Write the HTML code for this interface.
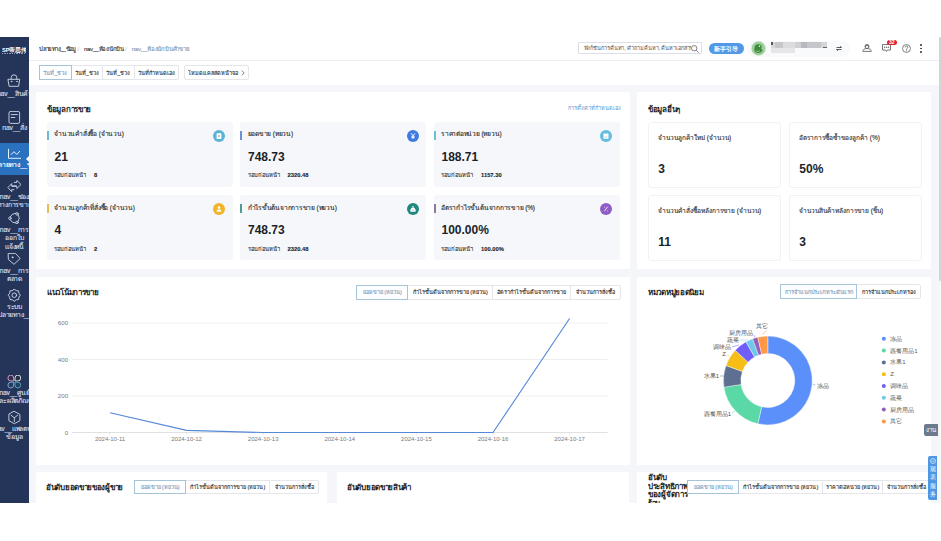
<!DOCTYPE html>
<html><head><meta charset="utf-8">
<style>
*{box-sizing:border-box;margin:0;padding:0}
html,body{width:941px;height:541px;overflow:hidden;background:#fff;font-family:"Liberation Sans",sans-serif;color:#222}
.abs{position:absolute}
#app{position:absolute;left:0;top:37px;width:941px;height:466px;background:#f5f6f9;overflow:hidden}
#side{position:absolute;left:0;top:0;width:29px;height:466px;background:#243559;overflow:hidden}
.sl{position:absolute;left:-6px;width:41px;text-align:center;color:#d3dae8;font-size:6.8px;line-height:8.5px;white-space:nowrap;letter-spacing:-0.15px}
.si{position:absolute;left:7px;width:14px;height:14px}
#hdr{position:absolute;left:29px;top:0;width:910px;height:24px;background:#fff;border-bottom:1px solid #eceef2}
#tabs{position:absolute;left:29px;top:24px;width:910px;height:24px;background:#fff}
#scroll{position:absolute;left:939px;top:0;width:2px;height:466px;background:#f7f8fa;border-left:0}
#thumb{position:absolute;left:939.3px;top:0;width:1.7px;height:244px;background:#d2d4d8;border-radius:1px}
.card{position:absolute;background:#fff;border-radius:1px}
.ttl{position:absolute;font-size:8px;font-weight:bold;color:#1d1d1f;white-space:nowrap;letter-spacing:-0.3px}
.stat{position:absolute;background:#f5f7fa;border-radius:3px;width:186px;height:65px}
.stat .bar{position:absolute;left:0;top:9px;width:2px;height:9px}
.stat .t{position:absolute;left:7.5px;top:7.5px;font-size:6.6px;color:#2b2b2b;white-space:nowrap;line-height:10px;letter-spacing:-0.22px}
.stat .v{position:absolute;left:8px;top:28px;font-size:12px;font-weight:bold;color:#1b1f2a;line-height:14px}
.stat .p{position:absolute;left:7.5px;top:49.5px;font-size:5.8px;color:#333;line-height:8px;white-space:nowrap;-webkit-text-stroke:0.1px currentColor}
.stat .p b{margin-left:8px;font-weight:bold;color:#222;font-size:5.8px}
.stat .ic{position:absolute;right:7.5px;top:8px;width:12px;height:12px}
.box{position:absolute;background:#fff;border:1px solid #f1f2f5;border-radius:3px;width:133px;height:66px}
.box .t{position:absolute;left:9.5px;top:9.8px;font-size:6.5px;color:#333;white-space:nowrap;line-height:9px}
.box .v{position:absolute;left:9.8px;top:39.2px;font-size:12px;font-weight:bold;color:#1b1f2a;line-height:14px}
.tg{position:absolute;display:flex;height:15px;border:1px solid #e4e6ea;border-radius:2px;background:#fff}
.tg div{height:100%;border-left:1px solid #e4e6ea;font-size:5.5px;color:#333;display:flex;align-items:center;justify-content:center;white-space:nowrap}
.tg div:first-child{border-left:none}
.tg div.on{outline:1px solid #a6c4d6;color:#7a9fc0;background:#fcfeff;z-index:1}
.bc{top:6.5px;font-size:6px;line-height:10px;white-space:nowrap;color:#333}
.stat .t,.box .t,.tg div,.bc,#tabs .tg div{-webkit-text-stroke:0.12px currentColor}
.sl{-webkit-text-stroke:0.15px currentColor}
</style></head><body>
<div id="app">
  <div id="side">
    <div class="abs" style="left:2px;top:9.5px;width:24px;height:6px;color:#fff;font-size:5.8px;font-weight:bold;line-height:6px;letter-spacing:-0.2px;white-space:nowrap;overflow:hidden">SP帝思传</div>
    <div class="abs" style="left:1.5px;top:16.3px;width:24px;height:0.8px;background:repeating-linear-gradient(90deg,#8f9bb8 0 1.5px,transparent 1.5px 2.4px)"></div>
    <!-- bag -->
    <svg class="si" style="top:37px" viewBox="0 0 14 14" fill="none" stroke="#c9d1e2" stroke-width="0.95" stroke-linejoin="round" stroke-linecap="round"><path d="M4.2 5.2V3.6a2.8 2.8 0 0 1 5.6 0V5.2"/><path d="M1.3 5.3h11.4l-1.1 7H2.5z"/><circle cx="4.5" cy="7.5" r="0.35"/><circle cx="10" cy="7.5" r="0.35"/></svg>
    <div class="sl" style="top:52.7px">nav__สินค้า</div>
    <!-- doc -->
    <svg class="si" style="top:74px" viewBox="0 0 14 14" fill="none" stroke="#c9d1e2" stroke-width="0.95" stroke-linejoin="round" stroke-linecap="round"><rect x="2" y="0.4" width="10.6" height="12" rx="1.6"/><path d="M4.2 3.6h6.2M4.2 6.5h3.6"/></svg>
    <div class="sl" style="top:86.7px">nav__สั่ง</div>
    <!-- active -->
    <div class="abs" style="left:0;top:106px;width:29px;height:32px;background:#2a72c0"></div>
    <svg class="si" style="top:111px" viewBox="0 0 14 14" fill="none" stroke="#e6f0fd" stroke-width="1" stroke-linejoin="round" stroke-linecap="round"><path d="M1.5 1.2V10.3H13.8"/><path d="M4.2 6.5L7 3.7 9.8 6.5 12.7 3.3"/></svg>
    <div class="sl" style="top:123.7px;color:#fff">ปลายทาง__ข้อมูล</div>
    <div class="abs" style="left:26px;top:119px;width:0;height:0;border-top:3px solid transparent;border-bottom:3px solid transparent;border-right:3px solid #fff"></div>
    <!-- swap -->
    <svg class="si" style="top:143px" viewBox="0 0 14 14" fill="none" stroke="#c9d1e2" stroke-width="0.95" stroke-linejoin="round" stroke-linecap="round"><path d="M7.2 2.4H9.8V0.4L14 4.5 9.8 8.5V6.4H5"/><path d="M6.8 9.7H4.7v2L0.9 7.6l3.8-4v2.2H9.3"/></svg>
    <div class="sl" style="top:155.7px">nav__ช่อง<br>ทางการขาย</div>
    <!-- share -->
    <svg class="si" style="top:175px" viewBox="0 0 14 14" fill="none" stroke="#c9d1e2" stroke-width="0.95" stroke-linejoin="round" stroke-linecap="round"><path d="M8.6 1.2A6 6 0 0 0 3.2 4.8M3.2 7.9A6 6 0 0 0 8.6 11M11.3 2.8A6 6 0 0 1 11.3 9.3"/><circle cx="10" cy="1.9" r="1.25"/><circle cx="2.9" cy="6.3" r="1.25"/><circle cx="10" cy="10.4" r="1.25"/></svg>
    <div class="sl" style="top:188.7px">nav__การ<br>ออกใบ<br>แจ้งหนี้</div>
    <!-- tag -->
    <svg class="si" style="top:216px" viewBox="0 0 14 14" fill="none" stroke="#c9d1e2" stroke-width="0.95" stroke-linejoin="round" stroke-linecap="round"><path d="M1.5 0.4H8.5L13.2 5.5 7 11.3 1.7 6.8z"/><circle cx="5.5" cy="4.3" r="0.5" fill="#c9d1e2"/></svg>
    <div class="sl" style="top:229.7px">nav__การ<br>ตลาด</div>
    <!-- gear -->
    <svg class="si" style="top:252px" viewBox="0 0 14 14" fill="none" stroke="#c9d1e2" stroke-width="0.95" stroke-linejoin="round" stroke-linecap="round"><path d="M7.30 0.10 L9.21 1.58 L11.61 1.89 L11.92 4.29 L13.40 6.20 L11.92 8.11 L11.61 10.51 L9.21 10.82 L7.30 12.30 L5.39 10.82 L2.99 10.51 L2.68 8.11 L1.20 6.20 L2.68 4.29 L2.99 1.89 L5.39 1.58Z"/><circle cx="7.3" cy="6.2" r="2.3"/></svg>
    <div class="sl" style="top:265.7px">ระบบ<br>ปลายทาง__</div>
    <!-- clover -->
    <svg class="si" style="top:338px" viewBox="0 0 14 14" stroke-width="0.95"><path d="M6.7 5.9V3a2.9 2.9 0 1 0-2.9 2.9z" fill="#3a2d4c" stroke="#c8a2bf"/><path d="M8 5.9V3a2.9 2.9 0 1 1 2.9 2.9z" fill="#273246" stroke="#dfe3ea"/><path d="M6.7 7.2v2.9a2.9 2.9 0 1 1-2.9-2.9z" fill="#243a5e" stroke="#86acd4"/><path d="M8 7.2v2.9a2.9 2.9 0 1 0 2.9-2.9z" fill="#1d4460" stroke="#5aa2bb"/></svg>
    <div class="sl" style="top:351.7px">nav__ศูนย์<br>และผลิตภัณฑ์</div>
    <!-- cube -->
    <svg class="si" style="top:374px" viewBox="0 0 14 14" fill="none" stroke="#c9d1e2" stroke-width="0.95" stroke-linejoin="round" stroke-linecap="round"><path d="M7.3 0.4L12.9 3.4V9.7L7.3 12.7 1.9 9.7V3.4z"/><path d="M4 4.2L7.3 6.8 10.7 4.2M7.3 6.8V10.6"/></svg>
    <div class="sl" style="top:387.7px">nav__แพลตฟอร์ม<br>ข้อมูล</div>
  </div>

  <div id="hdr">
    <div class="abs bc" style="left:10.3px;letter-spacing:-0.6px;width:36.5px;overflow:hidden">ปลายทาง__ข้อมูล</div><div class="abs bc" style="left:48.5px;color:#c8c8c8">/</div><div class="abs bc" style="left:54.9px;letter-spacing:-0.3px">nav__ห้องนักบิน</div><div class="abs bc" style="left:96.3px;color:#d0d0d0">/</div><div class="abs bc" style="left:102.7px;letter-spacing:-0.2px;color:#8399b3">nav__ห้องนักบินค้าขาย</div>
    <div class="abs" style="left:549px;top:5.4px;width:124px;height:12px;border:1px solid #dcdfe4;border-radius:1px;background:#fff"></div>
    <div class="abs" style="left:554.5px;top:6.4px;width:107px;height:10px;font-size:5.6px;color:#555;line-height:10px;white-space:nowrap;overflow:hidden;letter-spacing:-0.1px">ฟังก์ชันการค้นหา, คำถามค้นหา, ค้นหาเอกสาร</div>
    <svg class="abs" style="left:662px;top:8px;width:8px;height:8px" viewBox="0 0 8 8" fill="none" stroke="#666" stroke-width="0.8"><circle cx="3.2" cy="3.2" r="2.7"/><path d="M5.1 5.1l2.5 2.5"/></svg>
    <div class="abs" style="left:680px;top:5.7px;width:34.6px;height:11.2px;border-radius:6px;background:#5198e6;color:#fff;font-size:6.3px;line-height:11.2px;text-align:center;-webkit-text-stroke:0.2px #fff">新手引导</div>
    <div class="abs" style="left:718px;top:3.5px;width:103px;height:16px;border-radius:8px;background:#f9fafb"></div>
    <svg class="abs" style="left:722px;top:4.4px;width:15px;height:15px" viewBox="0 0 15 15"><circle cx="7.5" cy="7.5" r="7.2" fill="#9ccf9a" stroke="#e9f2e8" stroke-width="0.6"/><path d="M4 5c1-2 4-2.5 6-1 1 1 1 2.5 0 3.5l1.5 1.5c-.5 2-2.5 3.5-5 3-2-.3-3.5-2-3.2-4 .1-1 .4-2 .7-3z" fill="#3f8a3f"/><circle cx="8.5" cy="5.3" r="0.8" fill="#e8f5e8"/><path d="M5 9.5l2 1.2 2-1" stroke="#c9e8c6" stroke-width="0.6" fill="none"/></svg>
    <div class="abs" style="left:742.3px;top:5.4px;width:55.6px;height:5.6px;background:linear-gradient(90deg,#d8d8dc 0 8%,#c5c5ca 8% 21%,#dcdcdf 21% 42%,#d0d0d4 42% 53%,#b8b9be 53% 64%,#c5c6ca 64% 89%,#d5d5d8 89%)"></div>
    <div class="abs" style="left:742.3px;top:11px;width:24px;height:5px;background:#e6e6e9"></div>
    <div class="abs" style="left:742.3px;top:5px;width:1.8px;height:2.5px;background:#555"></div>
    <div class="abs" style="left:794px;top:9.6px;width:4px;height:0.8px;background:#666"></div>
    <svg class="abs" style="left:806.5px;top:9px;width:6px;height:5px" viewBox="0 0 6 5" fill="none" stroke="#333" stroke-width="0.8"><path d="M0.5 1.5h5M4 0.2l1.5 1.3M5.5 3.5h-5M2 4.8L0.5 3.5"/></svg>
    <svg class="abs" style="left:833px;top:6.8px;width:10px;height:8px" viewBox="0 0 10 8" fill="none" stroke="#666" stroke-width="0.9"><path d="M3 3.2V2.4a2 2 0 0 1 4 0v.8"/><circle cx="5" cy="3" r="1.6"/><path d="M0.8 7.4c0-1.8 1.5-2.9 4.2-2.9s4.2 1.1 4.2 2.9z"/></svg>
    <svg class="abs" style="left:852.5px;top:7.2px;width:9px;height:8px" viewBox="0 0 9 8" fill="none" stroke="#666" stroke-width="0.9"><path d="M0.5 0.5h8v5.5H5.5L4.5 7.5 3.5 6H0.5z"/><circle cx="2.7" cy="3.2" r="0.35" fill="#666"/><circle cx="4.5" cy="3.2" r="0.35" fill="#666"/><circle cx="6.3" cy="3.2" r="0.35" fill="#666"/></svg>
    <div class="abs" style="left:857.7px;top:3.4px;width:10.2px;height:4.6px;border-radius:2.5px;background:#e0202a;color:#fff;font-size:5px;line-height:4.8px;text-align:center;font-weight:bold">32</div>
    <svg class="abs" style="left:873px;top:6.6px;width:9px;height:9px" viewBox="0 0 10 10" fill="none" stroke="#666" stroke-width="0.9"><circle cx="5" cy="5" r="4.4"/><path d="M3.5 3.8a1.5 1.5 0 1 1 2.2 1.3c-.6.3-.7.6-.7 1.2"/><circle cx="5" cy="7.6" r="0.3"/></svg>
    <div class="abs" style="left:891.4px;top:7.3px;width:1.8px;height:1.8px;border-radius:50%;background:#333"></div>
    <div class="abs" style="left:891.4px;top:10.6px;width:1.8px;height:1.8px;border-radius:50%;background:#333"></div>
    <div class="abs" style="left:891.4px;top:13.8px;width:1.8px;height:1.8px;border-radius:50%;background:#333"></div>
  </div>

  <div id="tabs">
    <div class="tg" style="left:10px;top:4px;width:140px">
      <div class="on" style="width:31px">วันที่_ช่วง</div><div style="width:32px">วันที่_ช่วง</div><div style="width:32px">วันที่_ช่วง</div><div style="width:45px">วันที่กำหนดเอง</div>
    </div>
    <div class="tg" style="left:155px;top:4px;width:65px"><div style="width:63px">โหมดแคลสดหน้าจอ&nbsp;<svg width="4" height="6" viewBox="0 0 4 6" style="margin-left:1px"><path d="M0.8 0.6L3.2 3 0.8 5.4" fill="none" stroke="#444" stroke-width="0.7"/></svg></div></div>
  </div>

  <div id="scroll"></div><div id="thumb"></div>

  <!-- Card A -->
  <div class="card" style="left:36px;top:55px;width:594px;height:177px">
    <div class="ttl" style="left:11px;top:11px">ข้อมูลการขาย</div>
    <div class="abs" style="right:9px;top:12px;font-size:5.5px;color:#5b8fd6;white-space:nowrap">การตั้งค่าที่กำหนดเอง</div>
<div class="stat" style="left:10.5px;top:29.7px"><div class="bar" style="background:#6cb8da"></div><div class="t">จำนวนคำสั่งซื้อ (จำนวน)</div><div class="v">21</div><div class="p">รอบก่อนหน้า<b>8</b></div><svg class="ic" viewBox="0 0 12 12"><circle cx="6" cy="6" r="6" fill="#5ab4d8"/><rect x="3.6" y="3.3" width="4.8" height="5.6" rx="0.5" fill="#fff"/><rect x="5" y="5.4" width="2" height="1.3" fill="#9ab"/></svg></div>
<div class="stat" style="left:204.0px;top:29.7px"><div class="bar" style="background:#6a94d0"></div><div class="t">ยอดขาย (หยวน)</div><div class="v">748.73</div><div class="p">รอบก่อนหน้า<b>2320.48</b></div><svg class="ic" viewBox="0 0 12 12"><circle cx="6" cy="6" r="6" fill="#3f7ae0"/><path d="M4 3.2L6 5.8L8 3.2M6 5.8V9M4.4 6.3h3.2M4.4 7.6h3.2" stroke="#fff" stroke-width="0.9" fill="none"/></svg></div>
<div class="stat" style="left:397.5px;top:29.7px"><div class="bar" style="background:#6cc0dc"></div><div class="t">ราคาต่อหน่วย (หยวน)</div><div class="v">188.71</div><div class="p">รอบก่อนหน้า<b>1157.30</b></div><svg class="ic" viewBox="0 0 12 12"><circle cx="6" cy="6" r="6" fill="#62bde0"/><rect x="3.5" y="3.8" width="5" height="5" rx="0.5" fill="#fff"/><rect x="4.3" y="3" width="0.8" height="1.5" fill="#fff"/><rect x="6.9" y="3" width="0.8" height="1.5" fill="#fff"/><path d="M4.8 6.8l0.8 .7 1.6-1.4" stroke="#889" stroke-width="0.5" fill="none"/></svg></div>
<div class="stat" style="left:10.5px;top:103.0px"><div class="bar" style="background:#e6bd5c"></div><div class="t">จำนวนลูกค้าที่สั่งซื้อ (จำนวน)</div><div class="v">4</div><div class="p">รอบก่อนหน้า<b>2</b></div><svg class="ic" viewBox="0 0 12 12"><circle cx="6" cy="6" r="6" fill="#f0b429"/><circle cx="6" cy="4.6" r="1.3" fill="#fff"/><path d="M3.6 8.8c0-1.7 1-2.6 2.4-2.6s2.4 .9 2.4 2.6z" fill="#fff"/></svg></div>
<div class="stat" style="left:204.0px;top:103.0px"><div class="bar" style="background:#4f9a92"></div><div class="t">กำไรขั้นต้นจากการขาย (หยวน)</div><div class="v">748.73</div><div class="p">รอบก่อนหน้า<b>2320.48</b></div><svg class="ic" viewBox="0 0 12 12"><circle cx="6" cy="6" r="6" fill="#21887e"/><path d="M5 3.3h2l-0.6 1.2h-0.8z" fill="#fff"/><path d="M6 4.6c-1.8 0-2.8 2-2.8 3.2 0 .8.6 1 1.2 1h3.2c.6 0 1.2-.2 1.2-1 0-1.2-1-3.2-2.8-3.2z" fill="#fff"/><circle cx="6" cy="7" r="0.5" fill="#21887e"/></svg></div>
<div class="stat" style="left:397.5px;top:103.0px"><div class="bar" style="background:#8c7a9c"></div><div class="t">อัตรากำไรขั้นต้นจากการขาย (%)</div><div class="v">100.00%</div><div class="p">รอบก่อนหน้า<b>100.00%</b></div><svg class="ic" viewBox="0 0 12 12"><circle cx="6" cy="6" r="6" fill="#8e5cc4"/><path d="M4.3 8.3L7.7 3.7M4.2 4.3h.6M7.2 7.8h.6" stroke="#f0d8ff" stroke-width="1" fill="none"/></svg></div>
  </div>
  <!-- Card B -->
  <div class="card" style="left:637px;top:55px;width:294px;height:177px">
    <div class="ttl" style="left:11px;top:11px">ข้อมูลอื่นๆ</div>
<div class="box" style="left:10.5px;top:29.8px"><div class="t">จำนวนลูกค้าใหม่ (จำนวน)</div><div class="v">3</div></div>
<div class="box" style="left:151.5px;top:29.8px"><div class="t">อัตราการซื้อซ้ำของลูกค้า (%)</div><div class="v">50%</div></div>
<div class="box" style="left:10.5px;top:102.8px"><div class="t">จำนวนคำสั่งซื้อหลังการขาย (จำนวน)</div><div class="v">11</div></div>
<div class="box" style="left:151.5px;top:102.8px"><div class="t">จำนวนสินค้าหลังการขาย (ชิ้น)</div><div class="v">3</div></div>
  </div>
  <!-- Card C -->
  <div class="card" style="left:36px;top:240px;width:594px;height:188px">
    <div class="ttl" style="left:11px;top:8.5px">แนวโน้มการขาย</div>
<div class="tg" style="left:320.3px;top:7.8px;width:264.3px;height:15px"><div class="on" style="width:50.3px">ยอดขาย (หยวน)</div><div class="" style="width:85.7px">กำไรขั้นต้นจากการขาย (หยวน)</div><div class="" style="width:78.3px">อัตรากำไรขั้นต้นจากการขาย</div><div class="" style="width:50px">จำนวนการสั่งซื้อ</div></div>
  </div>
  <!-- Card D -->
  <div class="card" style="left:637px;top:240px;width:294px;height:188px">
    <div class="ttl" style="left:11px;top:8.5px">หมวดหมู่ยอดนิยม</div>
<div class="tg" style="left:142.8px;top:7.0px;width:141.2px;height:15px"><div class="on" style="width:76.5px">การจำแนกประเภทระดับแรก</div><div class="" style="width:64.7px">การจำแนกประเภทรอง</div></div>
  </div>
  <!-- Bottom cards -->
  <div class="card" style="left:36px;top:435px;width:291px;height:40px">
    <div class="ttl" style="left:10px;top:9px">อันดับยอดขายของผู้ขาย</div>
<div class="tg" style="left:98.2px;top:7.9px;width:185.2px;height:14px"><div class="on" style="width:50.4px">ยอดขาย (หยวน)</div><div class="" style="width:85.1px">กำไรขั้นต้นจากการขาย (หยวน)</div><div class="" style="width:49.7px">จำนวนการสั่งซื้อ</div></div>
  </div>
  <div class="card" style="left:337px;top:435px;width:292px;height:40px">
    <div class="ttl" style="left:10px;top:9px">อันดับยอดขายสินค้า</div>
  </div>
  <div class="card" style="left:637px;top:435px;width:294px;height:40px">
    <div class="ttl" style="left:11px;top:1.8px;line-height:8.7px">อันดับ<br>ประสิทธิภาพ<br>ของผู้จัดการ<br>ร้าน</div>
<div class="tg" style="left:50.2px;top:7.8px;width:243.6px;height:14px"><div class="on" style="width:50.5px">ยอดขาย (หยวน)</div><div class="" style="width:84.6px">กำไรขั้นต้นจากการขาย (หยวน)</div><div class="" style="width:60.5px">ราคาต่อหน่วย (หยวน)</div><div class="" style="width:48px">จำนวนการสั่งซื้อ</div></div>
  </div>
</div>
<svg class="abs" style="left:0;top:0;z-index:5" width="941" height="541" viewBox="0 0 941 541" font-family="Liberation Sans, sans-serif">
<line x1="72" y1="323" x2="607.5" y2="323" stroke="#ebebeb" stroke-width="0.8"/><text x="68.2" y="325.2" font-size="6.2" fill="#7a7a7a" text-anchor="end">600</text>
<line x1="72" y1="359.5" x2="607.5" y2="359.5" stroke="#ebebeb" stroke-width="0.8"/><text x="68.2" y="361.7" font-size="6.2" fill="#7a7a7a" text-anchor="end">400</text>
<line x1="72" y1="396" x2="607.5" y2="396" stroke="#ebebeb" stroke-width="0.8"/><text x="68.2" y="398.2" font-size="6.2" fill="#7a7a7a" text-anchor="end">200</text>
<line x1="72" y1="432.5" x2="607.5" y2="432.5" stroke="#d9d9d9" stroke-width="0.8"/><text x="68.2" y="434.7" font-size="6.2" fill="#7a7a7a" text-anchor="end">0</text>
<line x1="110.0" y1="432.5" x2="110.0" y2="435" stroke="#d9d9d9" stroke-width="0.6"/><text x="110.0" y="441.3" font-size="6" fill="#7a7a7a" text-anchor="middle">2024-10-11</text>
<line x1="186.6" y1="432.5" x2="186.6" y2="435" stroke="#d9d9d9" stroke-width="0.6"/><text x="186.6" y="441.3" font-size="6" fill="#7a7a7a" text-anchor="middle">2024-10-12</text>
<line x1="263.2" y1="432.5" x2="263.2" y2="435" stroke="#d9d9d9" stroke-width="0.6"/><text x="263.2" y="441.3" font-size="6" fill="#7a7a7a" text-anchor="middle">2024-10-13</text>
<line x1="339.8" y1="432.5" x2="339.8" y2="435" stroke="#d9d9d9" stroke-width="0.6"/><text x="339.8" y="441.3" font-size="6" fill="#7a7a7a" text-anchor="middle">2024-10-14</text>
<line x1="416.4" y1="432.5" x2="416.4" y2="435" stroke="#d9d9d9" stroke-width="0.6"/><text x="416.4" y="441.3" font-size="6" fill="#7a7a7a" text-anchor="middle">2024-10-15</text>
<line x1="493.0" y1="432.5" x2="493.0" y2="435" stroke="#d9d9d9" stroke-width="0.6"/><text x="493.0" y="441.3" font-size="6" fill="#7a7a7a" text-anchor="middle">2024-10-16</text>
<line x1="569.6" y1="432.5" x2="569.6" y2="435" stroke="#d9d9d9" stroke-width="0.6"/><text x="569.6" y="441.3" font-size="6" fill="#7a7a7a" text-anchor="middle">2024-10-17</text>
<polyline points="110.0,412.8 186.6,430.4 263.2,432.5 339.8,432.5 416.4,432.5 493.0,432.5 569.6,318.5" fill="none" stroke="#5589d8" stroke-width="1.15" stroke-linejoin="round"/>
<path d="M767.80 336.10A44.4 44.4 0 1 1 757.81 423.76L761.73 406.81A27 27 0 1 0 767.80 353.50Z" fill="#5B8FF9" stroke="#fff" stroke-width="0.4"/>
<path d="M757.81 423.76A44.4 44.4 0 0 1 723.90 387.14L741.10 384.54A27 27 0 0 0 761.73 406.81Z" fill="#5AD8A6" stroke="#fff" stroke-width="0.4"/>
<path d="M723.90 387.14A44.4 44.4 0 0 1 726.00 365.53L742.38 371.40A27 27 0 0 0 741.10 384.54Z" fill="#5D7092" stroke="#fff" stroke-width="0.4"/>
<path d="M726.00 365.53A44.4 44.4 0 0 1 735.22 350.33L747.99 362.16A27 27 0 0 0 742.38 371.40Z" fill="#F6BD16" stroke="#fff" stroke-width="0.4"/>
<path d="M735.22 350.33A44.4 44.4 0 0 1 746.00 341.82L754.55 356.98A27 27 0 0 0 747.99 362.16Z" fill="#6F5EF9" stroke="#fff" stroke-width="0.4"/>
<path d="M746.00 341.82A44.4 44.4 0 0 1 752.61 338.78L758.57 355.13A27 27 0 0 0 754.55 356.98Z" fill="#6DC8EC" stroke="#fff" stroke-width="0.4"/>
<path d="M752.61 338.78A44.4 44.4 0 0 1 757.74 337.26L761.68 354.20A27 27 0 0 0 758.57 355.13Z" fill="#945FB9" stroke="#fff" stroke-width="0.4"/>
<path d="M757.74 337.26A44.4 44.4 0 0 1 767.80 336.10L767.80 353.50A27 27 0 0 0 761.68 354.20Z" fill="#FF9845" stroke="#fff" stroke-width="0.4"/>
<polyline points="812.5,384 815.5,385" fill="none" stroke="#5B8FF9" stroke-width="0.5"/><text x="816.5" y="388.3" font-size="6" fill="#555" text-anchor="start">冻品</text>
<polyline points="735,411 732,413" fill="none" stroke="#5AD8A6" stroke-width="0.5"/><text x="731" y="415.5" font-size="6" fill="#555" text-anchor="end">西餐用品1</text>
<polyline points="723.5,376 720,376" fill="none" stroke="#5D7092" stroke-width="0.5"/><text x="719" y="378" font-size="6" fill="#555" text-anchor="end">水果1</text>
<polyline points="729,356 727,355" fill="none" stroke="#F6BD16" stroke-width="0.5"/><text x="726" y="356.4" font-size="6" fill="#555" text-anchor="end">Z</text>
<polyline points="739,345 732,347" fill="none" stroke="#6F5EF9" stroke-width="0.5"/><text x="730.6" y="349.2" font-size="6" fill="#555" text-anchor="end">调味品</text>
<polyline points="748,340 740,340" fill="none" stroke="#6DC8EC" stroke-width="0.5"/><text x="739" y="342" font-size="6" fill="#555" text-anchor="end">蔬菜</text>
<polyline points="755,337.5 754,335" fill="none" stroke="#945FB9" stroke-width="0.5"/><text x="753.3" y="335.3" font-size="6" fill="#555" text-anchor="end">厨房用品</text>
<polyline points="762.2,335 766.6,330" fill="none" stroke="#FF9845" stroke-width="0.5"/><text x="767.7" y="328.4" font-size="6" fill="#555" text-anchor="end">其它</text>
<circle cx="883.8" cy="338.8" r="2" fill="#5B8FF9"/><text x="890.3" y="340.8" font-size="6" fill="#595959">冻品</text>
<circle cx="883.8" cy="350.6" r="2" fill="#5AD8A6"/><text x="890.3" y="352.6" font-size="6" fill="#595959">西餐用品1</text>
<circle cx="883.8" cy="362.4" r="2" fill="#5D7092"/><text x="890.3" y="364.4" font-size="6" fill="#595959">水果1</text>
<circle cx="883.8" cy="374.2" r="2" fill="#F6BD16"/><text x="890.3" y="376.2" font-size="6" fill="#595959">Z</text>
<circle cx="883.8" cy="386.0" r="2" fill="#6F5EF9"/><text x="890.3" y="388.0" font-size="6" fill="#595959">调味品</text>
<circle cx="883.8" cy="397.8" r="2" fill="#6DC8EC"/><text x="890.3" y="399.8" font-size="6" fill="#595959">蔬菜</text>
<circle cx="883.8" cy="409.6" r="2" fill="#945FB9"/><text x="890.3" y="411.6" font-size="6" fill="#595959">厨房用品</text>
<circle cx="883.8" cy="421.4" r="2" fill="#FF9845"/><text x="890.3" y="423.4" font-size="6" fill="#595959">其它</text>
</svg>
<div class="abs" style="left:924px;top:424px;width:14px;height:12px;background:#6b7a8c;border-radius:2px 0 0 2px;color:#fff;font-size:6.2px;line-height:12px;text-align:center;z-index:6;letter-spacing:-0.2px">งาน</div>
<div class="abs" style="left:928px;top:455.8px;width:9.4px;height:44.2px;background:#4f97e3;border-radius:2px 0 0 2px;z-index:6"><svg class="abs" style="left:1.6px;top:2.6px" width="6" height="6" viewBox="0 0 6 6" fill="none" stroke="#fff" stroke-width="0.6"><circle cx="3" cy="3" r="2.5"/><path d="M1.5 3h3"/></svg><div class="abs" style="left:0;top:9px;width:9.4px;color:#fff;font-size:6px;line-height:8.4px;text-align:center">观<br>表<br>服<br>务</div></div>
</body></html>
